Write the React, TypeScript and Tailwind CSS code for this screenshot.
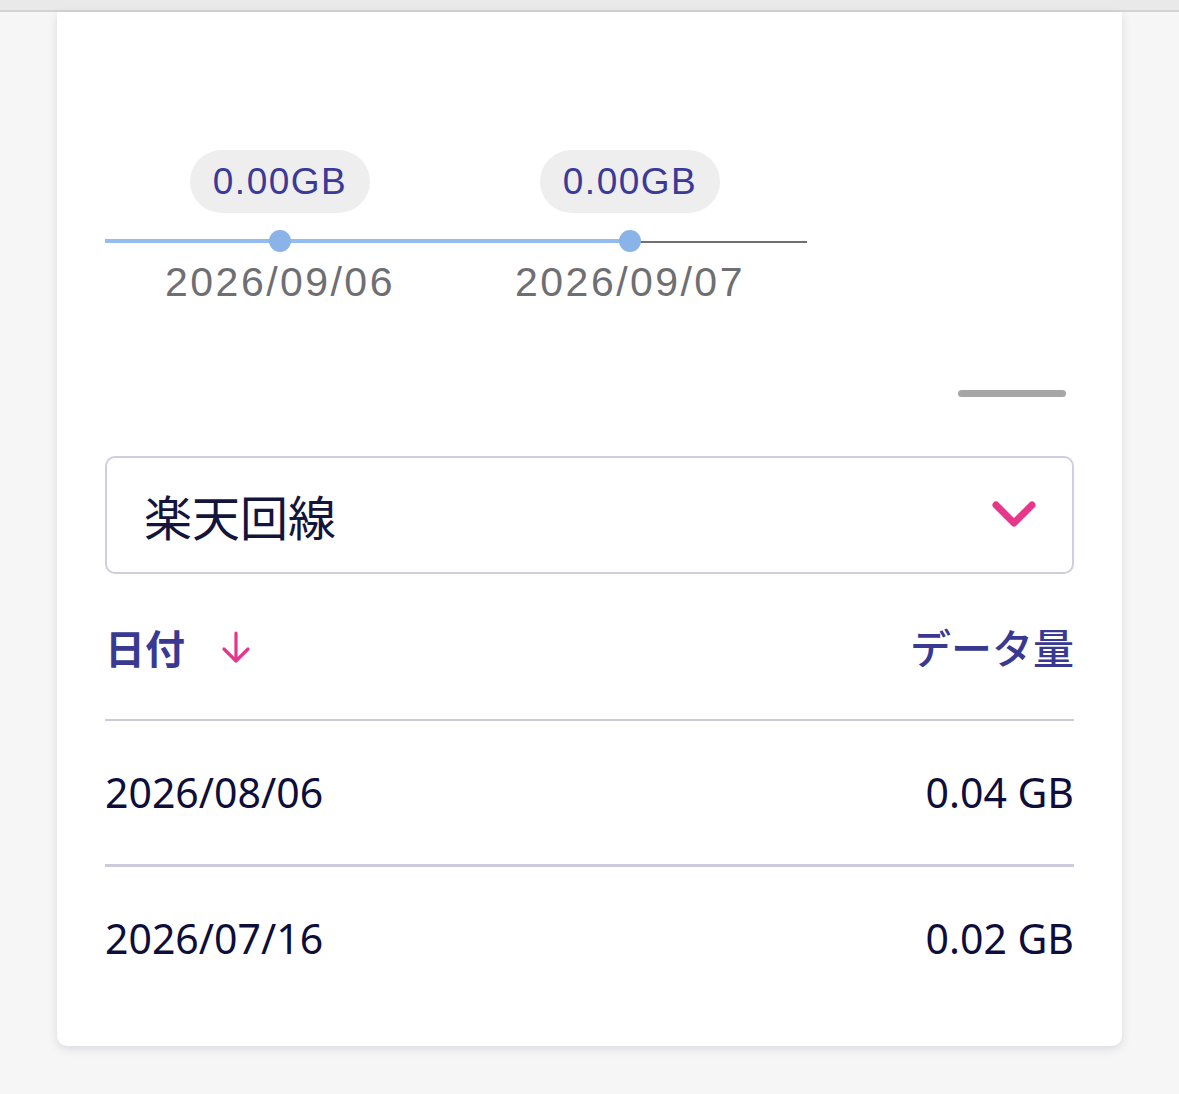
import React from "react";

interface Point {
    value: string
    date: string
}

interface Usage {
    date: string
    amount: string
}

const points: Point[] = [
    { value: "0.00GB", date: "2026/09/06" },
    { value: "0.00GB", date: "2026/09/07" },
]

const usages: Usage[] = [
    { date: "2026/08/06", amount: "0.04 GB" },
    { date: "2026/07/16", amount: "0.02 GB" },
]

const sans = "font-['Liberation_Sans',Arial,sans-serif]"
const noto = "font-['Noto_Sans','Noto_Sans_CJK_JP',sans-serif]"
const cjk = "font-['Noto_Sans_CJK_JP','Noto_Sans',sans-serif]"

function Chart() {
    return (
        <div className="relative w-[702px]">
            {/* axis */}
            <div className="absolute left-0 top-[91px] h-[2px] w-[702px] bg-[#707070]" />
            <div className="absolute left-0 top-[89px] h-[4px] w-[525px] bg-[#93bdf0]" />
            <div className="relative grid grid-cols-[350px_350px]">
                {points.map((p, i) => (
                    <div key={i} className="flex flex-col items-center">
                        <div className={`flex h-[63px] w-[180px] items-center justify-center rounded-full bg-[#eeeeee] text-[37px] tracking-[0.04em] text-[#3a3a98] ${sans}`}>
                            {p.value}
                        </div>
                        <div className="mt-[17px] h-[22px] w-[22px] rounded-full bg-[#8ab4e8]" />
                        <div className={`mt-[5px] text-[41px] leading-[50px] tracking-[0.06em] text-[#6f6f73] ${sans}`}>
                            {p.date}
                        </div>
                    </div>
                ))}
            </div>
        </div>
    )
}

export default function App() {
    return (
        <div className="min-h-[1094px] bg-[#f6f6f6]">
            <div className="h-[10px] bg-[#e9e9e9]" />
            <div className="h-[2px] bg-[#d4d4d4]" />
            <div className="ml-[57px] w-[1065px] rounded-b-[10px] bg-white px-12 pt-[138px] pb-[36px] shadow-[0_3px_10px_rgba(60,60,90,0.14)]">
                <Chart />

                <div className="mt-[83px] flex justify-end pr-[8px]">
                    <div className="h-[7px] w-[108px] rounded-full bg-[#a6a6a6]" />
                </div>

                <div className="mt-[59px] flex h-[118px] items-center justify-between rounded-[10px] border-2 border-[#cfcde0] pl-[37px] pr-[36px]">
                    <span className={`text-[48px] text-[#14143c] ${cjk}`}>楽天回線</span>
                    <svg width="44" height="28" viewBox="0 0 44 28" fill="none">
                        <path d="M4 4 L22 22 L40 4" stroke="#e8368a" strokeWidth="7" strokeLinecap="round" strokeLinejoin="round" />
                    </svg>
                </div>

                <div className="flex h-[145px] items-center justify-between">
                    <div className="flex items-center gap-[34px]">
                        <span className={`text-[40px] font-bold text-[#393993] ${cjk}`}>日付</span>
                        <svg width="34" height="34" viewBox="0 0 34 34" fill="none">
                            <path d="M17 3 V31 M5 19 L17 31 L29 19" stroke="#e4368a" strokeWidth="3.2" strokeLinecap="round" strokeLinejoin="round" />
                        </svg>
                    </div>
                    <span className={`text-[41px] font-medium text-[#393993] ${cjk}`}>データ量</span>
                </div>

                {usages.map((u, i) => (
                    <div key={i}>
                        <div className={i === 0 ? "h-[2px] bg-[#cccbdb]" : "h-[3px] bg-[#cccbdb]"} />
                        <div className={`flex h-[143px] items-center justify-between text-[41px] text-[#0e0e3a] ${noto}`}>
                            <span>{u.date}</span>
                            <span>{u.amount}</span>
                        </div>
                    </div>
                ))}
            </div>
        </div>
    )
}
